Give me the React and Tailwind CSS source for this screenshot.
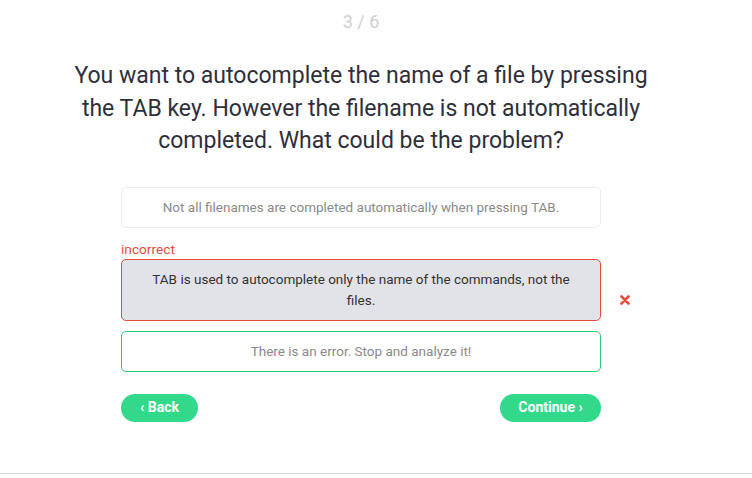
export default function App() {
  return (
    <div className="w-[752px] h-[478px] bg-white flex flex-col" style={{ fontFamily: "Roboto, 'Liberation Sans', sans-serif" }}>
      <div className="w-[722px] flex flex-col items-center">
        <p className="mt-[10px] text-[18px] leading-[24px] text-[#cfcfcf]">3 / 6</p>

        <h1 className="mt-[26px] w-[600px] text-center text-[23px] leading-[32.5px] text-[#2f2f3b]">
          You want to autocomplete the name of a file by pressing the TAB key. However the filename is not automatically completed. What could be the problem?
        </h1>

        <div className="mt-[29px] w-[480px] flex flex-col">
          <div className="h-[41px] flex items-center justify-center rounded-[5px] border border-[#ececec] text-[13.5px] text-[#8a8a8a]">
            Not all filenames are completed automatically when pressing TAB.
          </div>

          <p className="mt-[13px] text-[13.7px] leading-[16px] text-[#e74c3c]">incorrect</p>

          <div className="relative mt-[2px]">
            <div className="h-[62px] flex items-center justify-center px-[24px] rounded-[5px] border border-[#e74c3c] bg-[#e2e3e8] text-center text-[13.5px] leading-[21px] text-[#333]">
              TAB is used to autocomplete only the name of the commands, not the files.
            </div>
            <svg className="absolute left-[499px] top-[36px]" width="10" height="10" viewBox="0 0 10 10">
              <path d="M1.5 1.5 L8.5 8.5 M8.5 1.5 L1.5 8.5" stroke="#e74c3c" strokeWidth="2.6" strokeLinecap="round" />
            </svg>
          </div>

          <div className="mt-[10px] h-[41px] flex items-center justify-center rounded-[5px] border border-[#2ecc71] text-[13.5px] text-[#8a8a8a]">
            There is an error. Stop and analyze it!
          </div>

          <div className="mt-[22px] flex justify-between">
            <button className="w-[77px] h-[28px] rounded-full bg-[#33d98a] text-white text-[14px] font-bold">
              ‹ Back
            </button>
            <button className="w-[101px] h-[28px] rounded-full bg-[#33d98a] text-white text-[14px] font-bold">
              Continue ›
            </button>
          </div>
        </div>
      </div>
      <div className="mt-auto mb-[4px] h-px bg-[#d6d6d6]" />
    </div>
  );
}
